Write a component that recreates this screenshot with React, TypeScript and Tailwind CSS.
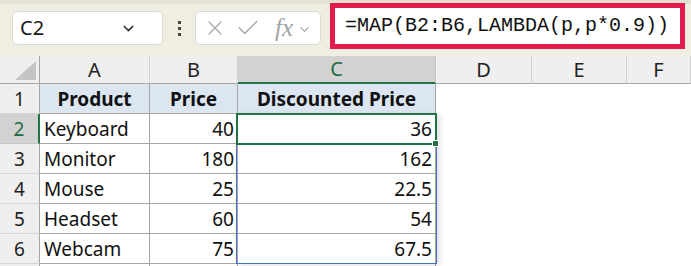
import { ChevronDown, X, Check } from "lucide-react"

const COLS = ["A", "B", "C", "D", "E", "F"]
const ROWS = [
  ["Product", "Price", "Discounted Price"],
  ["Keyboard", "40", "36"],
  ["Monitor", "180", "162"],
  ["Mouse", "25", "22.5"],
  ["Headset", "60", "54"],
  ["Webcam", "75", "67.5"],
]

const font = { fontFamily: '"Noto Sans", Arial, sans-serif' }

export default function App() {
  return (
    <div className="w-[691px] h-[266px] overflow-hidden bg-white relative" style={font}>
      {/* formula bar */}
      <div className="h-[56px] bg-[#f0eee1] border-t-[4px] border-[#e4e1d2] flex items-start pl-[12px] pt-[7px]">
        <div className="w-[151px] h-[34px] bg-white rounded-[5px] border border-[#dcdad0] flex items-center justify-between pl-[7px] pr-[25px]">
          <span className="text-[20px] text-[#1a1a1a] leading-none">C2</span>
          <ChevronDown size={17} strokeWidth={2} className="text-[#333]" />
        </div>
        <div className="w-[32px] h-[34px] flex flex-col items-center justify-center gap-[3px]">
          <span className="w-[3px] h-[3px] bg-[#444]" />
          <span className="w-[3px] h-[3px] bg-[#444]" />
          <span className="w-[3px] h-[3px] bg-[#444]" />
        </div>
        <div className="w-[126px] h-[34px] bg-white rounded-[5px] border border-[#dcdad0] flex items-center pl-[7px] text-[#a3a3a3]">
          <X size={24} strokeWidth={1.2} />
          <Check size={26} strokeWidth={1.2} className="ml-[8px]" />
          <span className="ml-[14px] text-[25px] italic leading-none -mt-[2px]" style={{ fontFamily: '"Liberation Serif", serif' }}>fx</span>
          <ChevronDown size={15} strokeWidth={1.8} className="ml-[4px] mt-[2px]" />
        </div>
        <div className="ml-[9px] -mt-[8px] w-[355px] h-[46px] border-[5px] border-[#e21c4c] bg-white flex items-center pl-[10px]">
          <span className="text-[20px] text-[#111] leading-none" style={{ fontFamily: '"Liberation Mono", monospace' }}>
            =MAP(B2:B6,LAMBDA(p,p*0.9))
          </span>
        </div>
      </div>

      {/* sheet */}
      <div className="relative grid grid-cols-[40px_110px_88px_198px_96px_95px_1fr] grid-rows-[28px_30px_30px_30px_30px_30px_30px_30px]">
        {/* column headers */}
        <div className="bg-[#efefef] border-r border-b border-[#a6a6a6] relative">
          <div className="absolute left-[15px] bottom-[3px] w-0 h-0 border-l-[21px] border-l-transparent border-b-[19px] border-b-[#c4c4c4]" />
        </div>
        {COLS.map((c) => (
          <div
            key={c}
            className={`flex items-center justify-center text-[20px] border-r ${
              c === "C"
                ? "bg-[#d2d2d2] text-[#1e6b3f] border-b-2 border-b-[#217346] border-r-[#c6c6c6]"
                : "bg-[#efefef] text-[#222] border-b border-b-[#a6a6a6] border-r-[#d0d0d0]"
            }`}
          >
            {c}
          </div>
        ))}

        {[1, 2, 3, 4, 5, 6, 7].map((r) => (
          <Row key={r} r={r} />
        ))}

        {/* spill range shadow + outline */}
        <div className="absolute left-[236px] top-[57px] w-[201px] h-[151px] border border-[#4472c4] shadow-[3px_2px_6px_rgba(0,0,0,0.12)] pointer-events-none" />
        {/* active cell */}
        <div className="absolute left-[236px] top-[57px] w-[201px] h-[32px] border-2 border-[#217346] pointer-events-none" />
        <div className="absolute left-[432px] top-[84px] w-[7px] h-[7px] bg-[#217346] border border-white pointer-events-none" />
      </div>
    </div>
  )
}

function Row({ r }: { r: number }) {
  const data = ROWS[r - 1]
  const active = r === 2
  return (
    <>
      <div
        className={`flex items-center justify-center text-[19px] pt-[2px] border-b ${
          active
            ? "bg-[#d2d2d2] text-[#1e6b3f] border-r-2 border-r-[#217346] border-b-[#c6c6c6]"
            : "bg-[#efefef] text-[#222] border-r border-r-[#a6a6a6] border-b-[#d6d6d6]"
        }`}
      >
        {data ? r : ""}
      </div>
      {data ? (
        data.map((v, i) => {
          const head = r === 1
          return (
            <div
              key={i}
              className={`flex items-center text-[19px] pt-[2px] text-[#111] border-r border-b border-[#a6a6a6] ${
                head ? "bg-[#dce6f1] font-bold justify-center" : i === 0 ? "bg-white pl-[4px]" : "bg-white justify-end pr-[3px]"
              }`}
            >
              {v}
            </div>
          )
        })
      ) : (
        <>
          <div className="border-r border-[#a6a6a6]" />
          <div className="border-r border-[#a6a6a6]" />
          <div className="border-r border-[#a6a6a6]" />
        </>
      )}
      <div />
      <div />
      <div />
    </>
  )
}
